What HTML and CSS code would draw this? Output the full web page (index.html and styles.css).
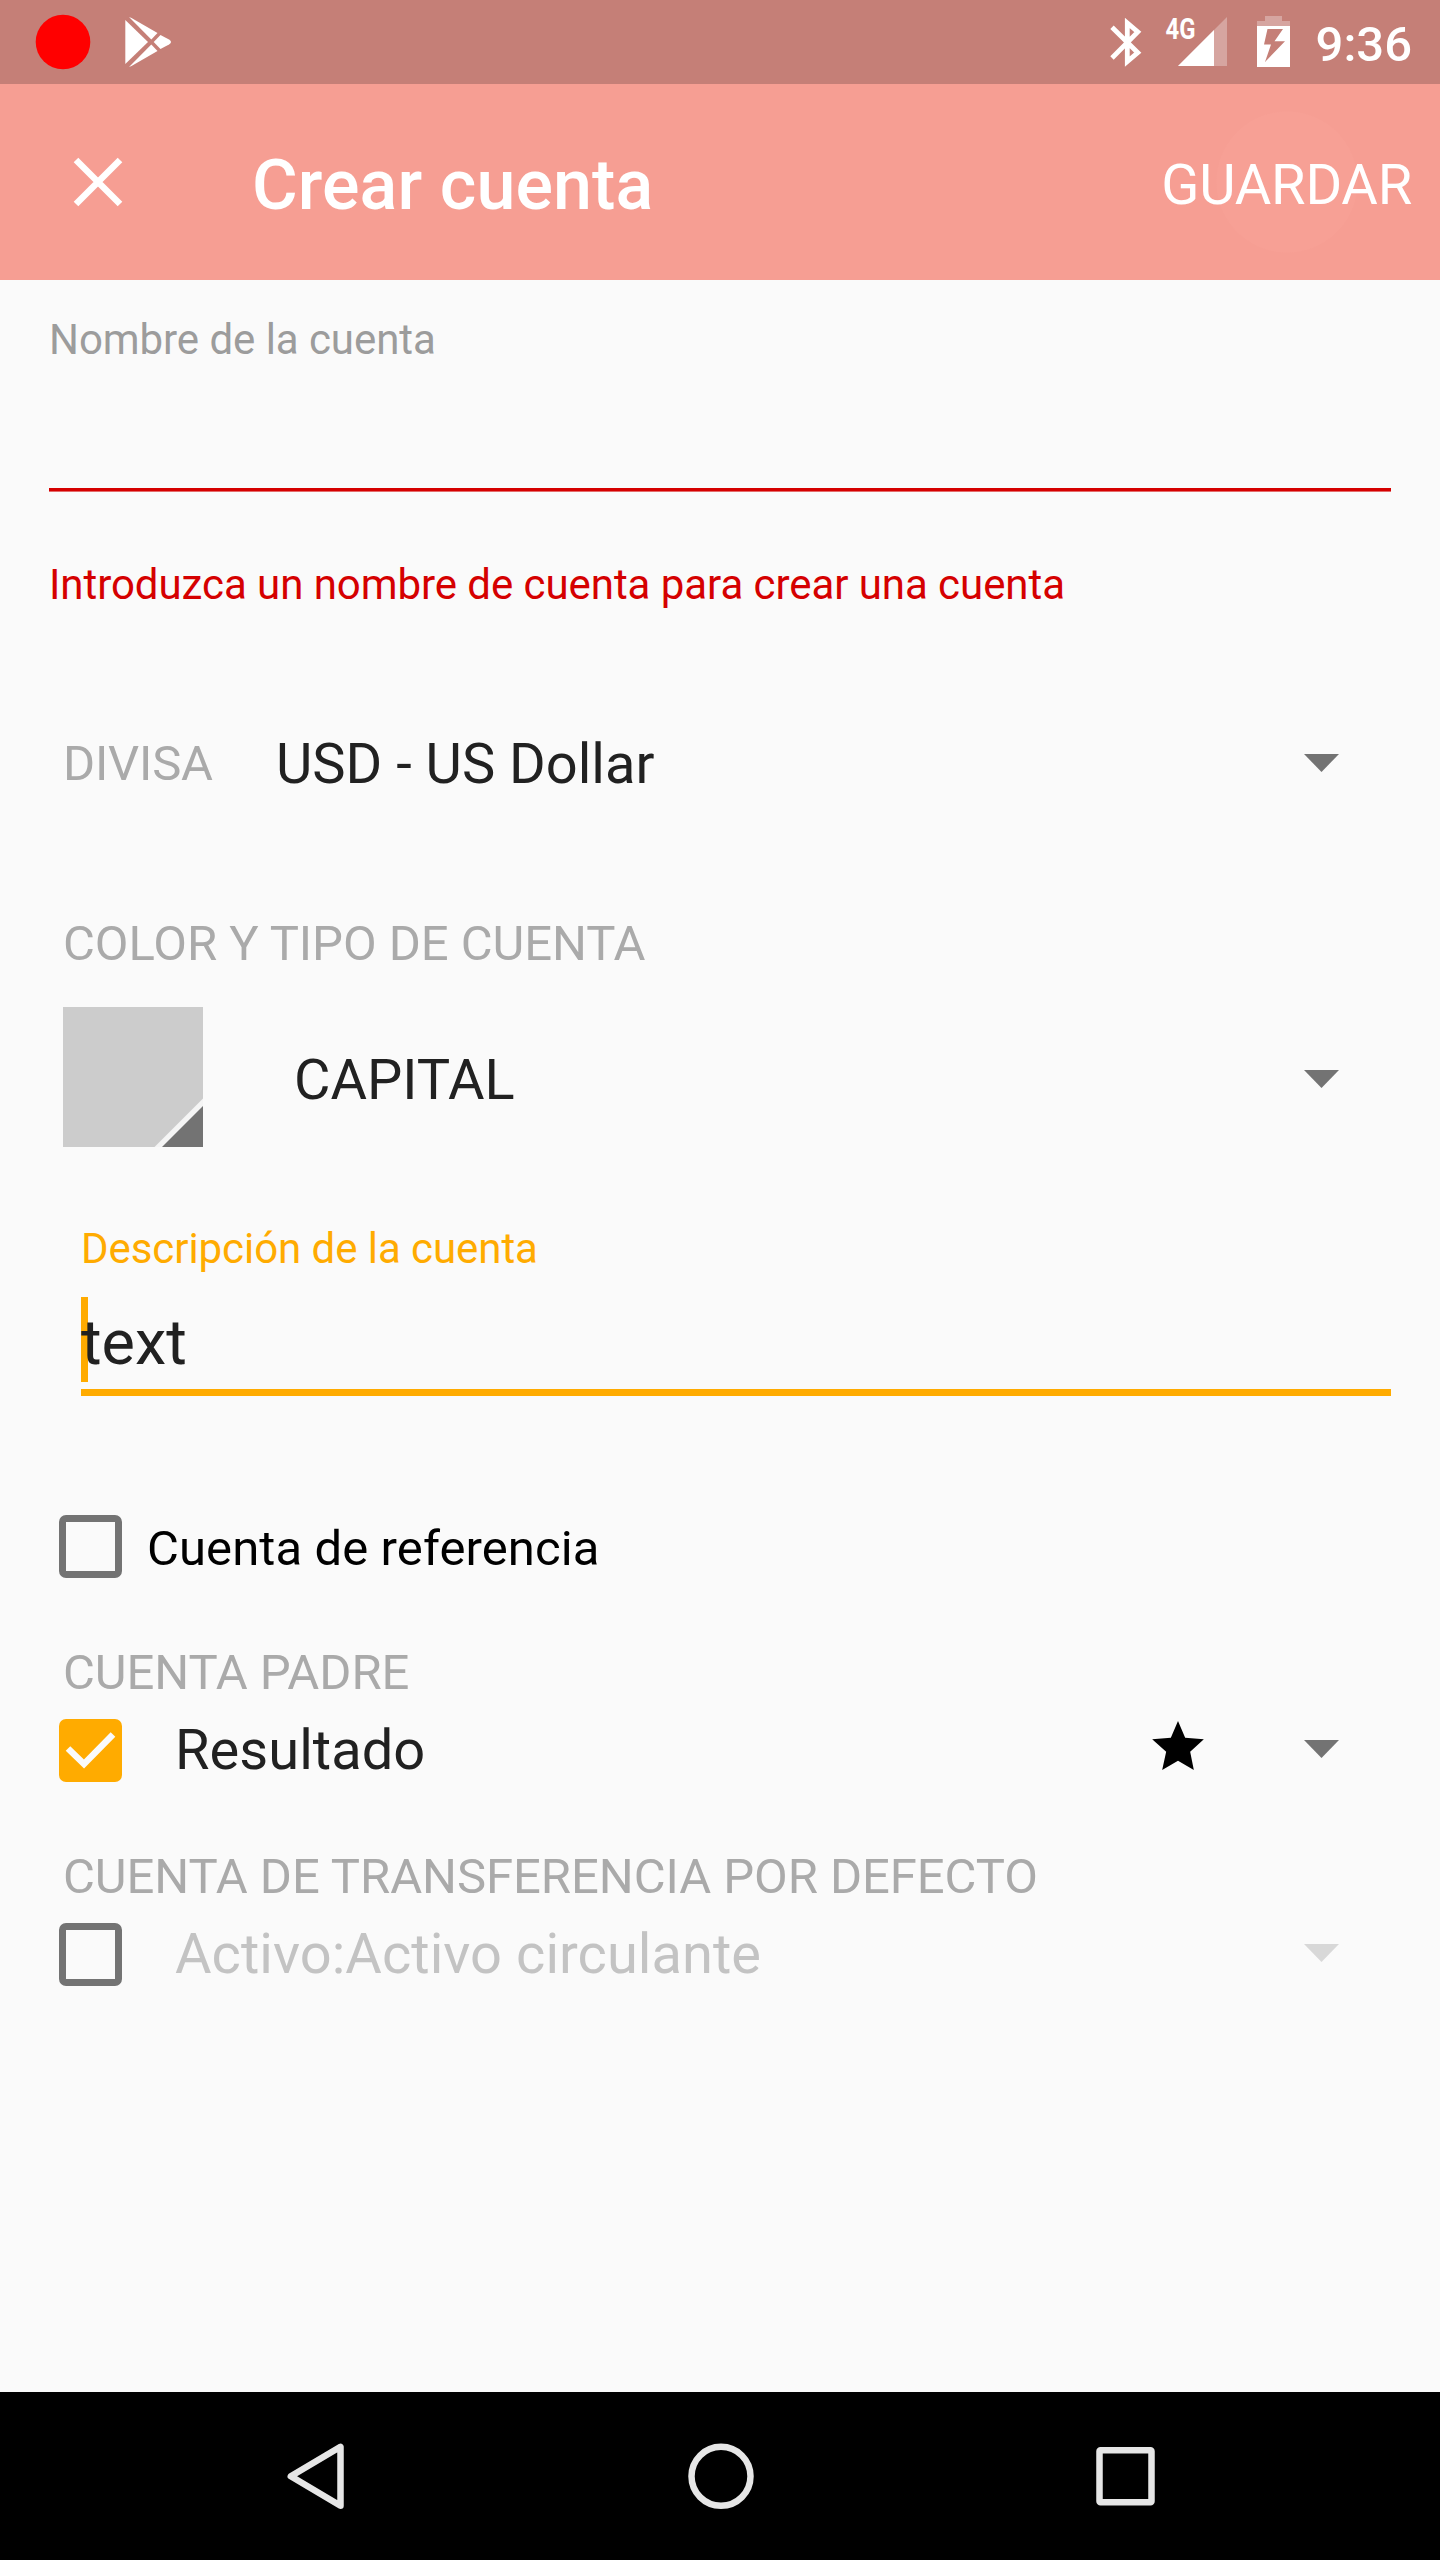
FILE: index.html
```html
<!DOCTYPE html>
<html lang="es">
<head>
<meta charset="utf-8">
<title>Crear cuenta</title>
<link rel="stylesheet" href="styles.css">
</head>
<body>
<div class="screen">
  <header class="status">
    <svg class="status-left" viewBox="0 0 200 84">
      <circle cx="63" cy="42" r="27.3" fill="#f00"/>
      <g fill="#fff">
        <path d="M125.300 20 L148 42 L125.300 64 Z"/>
        <path d="M129 17 L131.500 18 L157.500 33 L151.300 39.500 Z"/>
        <path d="M129 67 L131.500 66 L157.500 51 L151.300 44.500 Z"/>
        <path d="M160.500 35 L169 39.500 Q173 42 169 44.500 L160.500 49 L153.700 42 Z"/>
      </g>
    </svg>
    <div class="status-right">
      <svg class="status-icons" viewBox="1100 0 210 84">
        <path d="M1112 27.300 L1137.800 52.700 L1127.300 61.500 V23 L1137.800 32 L1112 58" fill="none" stroke="#fff" stroke-width="4.800"/>
        <path d="M1227 17 V66 H1178 Z" fill="#fff" fill-opacity=".3"/>
        <path d="M1214 30 V66 H1178 Z" fill="#fff"/>
        <path d="M1265 16 H1282 V21 H1290 V26 H1257 V21 H1265 Z" fill="#fff" fill-opacity=".3"/>
        <path fill-rule="evenodd" d="M1257 26 H1290 V67 H1257 Z M1267.500 29 L1264 44.500 H1271 L1265 62 L1285 41.300 H1274.500 L1283 29 Z" fill="#fff"/>
        <text class="network" x="1165.500" y="39" textLength="30" lengthAdjust="spacingAndGlyphs">4G</text>
      </svg>
      <span class="clock">9:36</span>
    </div>
  </header>
  <div class="toolbar">
    <svg class="close" viewBox="0 0 50 50"><path d="M3 3 L47 47 M47 3 L3 47" stroke="#fff" stroke-width="6.500"/></svg>
    <h1 class="title">Crear cuenta</h1>
    <span class="save">GUARDAR</span>
  </div>
  <main class="form">
    <div class="field name">
      <label class="hint">Nombre de la cuenta</label>
      <div class="name-line"></div>
      <p class="error">Introduzca un nombre de cuenta para crear una cuenta</p>
    </div>
    <div class="row currency">
      <span class="caption currency-caption">DIVISA</span>
      <span class="value">USD - US Dollar</span>
      <i class="arrow"></i>
    </div>
    <div class="caption type-caption">COLOR Y TIPO DE CUENTA</div>
    <div class="row type">
      <svg class="swatch" viewBox="0 0 140 140"><path d="M0 0H140V140H0Z" fill="#ccc"/><path d="M91.500 140 L140 91.500 V140 Z" fill="#f5f5f5"/><path d="M99 140 L140 99 V140 Z" fill="#737373"/></svg>
      <span class="value">CAPITAL</span>
      <i class="arrow"></i>
    </div>
    <div class="description">
      <label class="hint active">Descripción de la cuenta</label>
      <div class="input"><i class="cursor"></i><span class="input-text">text</span></div>
    </div>
    <div class="row placeholder">
      <i class="box"></i>
      <span class="box-label">Cuenta de referencia</span>
    </div>
    <div class="caption parent-caption">CUENTA PADRE</div>
    <div class="row account">
      <svg class="box checked" viewBox="0 0 63 63"><path d="M9 29.500 L25 45 L54 15.500" fill="none" stroke="#fafafa" stroke-width="6.500"/></svg>
      <span class="value">Resultado</span>
      <svg class="star" viewBox="215 242 155 147"><path d="M292.500 242 L314 292 L370 297 L329 334 L340 389 L292.500 361 L245 389 L257 334 L215 297 L271 292 Z"/></svg>
      <i class="arrow"></i>
    </div>
    <div class="caption transfer-caption">CUENTA DE TRANSFERENCIA POR DEFECTO</div>
    <div class="row account disabled">
      <i class="box"></i>
      <span class="value">Activo:Activo circulante</span>
      <i class="arrow"></i>
    </div>
  </main>
  <nav class="navbar">
    <svg viewBox="0 0 68 68"><path d="M59.500 4.800 V63.800 L9.800 34.300 Z"/></svg>
    <svg viewBox="0 0 68 68"><circle cx="34" cy="34.300" r="29.500"/></svg>
    <svg viewBox="0 0 68 68"><rect x="7.500" y="8.300" width="52" height="52" rx="1"/></svg>
  </nav>
</div>
</body>
</html>
```
FILE: styles.css
```css
* { box-sizing: border-box; }
body { margin: 0; background: #fafafa; font-family: Roboto, sans-serif; color: #212121; }
.screen { width: 1440px; height: 2560px; display: flex; flex-direction: column; overflow: hidden; }
.status { height: 84px; flex: none; background: #c57f77; display: flex; justify-content: space-between; color: #fff; }
.status-left { width: 200px; height: 84px; }
.status-right { display: flex; padding-right: 28px; }
.status-icons { width: 210px; height: 84px; }
.network { font: 700 29px Roboto, sans-serif; fill: #fff; }
.clock { width: 102px; font-size: 49px; font-weight: 500; line-height: 57px; padding-top: 16px; text-align: right; }
.toolbar {
  height: 196px;
  flex: none;
  background: radial-gradient(circle at 1287px 98px, #f7a095 70px, transparent 71px) #f69e93;
  display: flex;
  align-items: center;
  padding: 6px 28px 0 73px;
  color: #fff;
}
.close { width: 50px; height: 50px; margin-bottom: 6px; }
.title { margin: 0 0 0 129px; font-size: 70px; font-weight: 500; line-height: 82px; letter-spacing: .1px; }
.save { margin-left: auto; font-size: 56px; line-height: 66px; letter-spacing: -.2px; }
.form { flex: 1; display: flex; flex-direction: column; }
.name { padding: 35px 49px 0; }
.hint { display: block; font-size: 42px; line-height: 50px; letter-spacing: -.06px; color: #9c9c9c; }
.name-line { height: 4px; margin-top: 123px; background: linear-gradient(#d50000 3px, #e36b6b 3px); }
.error { margin: 68px 0 0; font-size: 42px; line-height: 50px; letter-spacing: -.06px; color: #d50000; }
.row { display: flex; align-items: center; padding-right: 101px; }
.caption { font-size: 49px; line-height: 58px; letter-spacing: -.06px; color: #aaa; }
.value { font-size: 56px; line-height: 66px; }
.arrow { flex: none; margin-left: auto; margin-bottom: 2px; width: 35px; height: 18px; background: #737373; clip-path: polygon(0 0, 100% 0, 50% 100%); }
.currency { margin-top: 119px; padding-left: 63px; height: 70px; }
.currency-caption { width: 213px; letter-spacing: -.2px; }
.type-caption { padding-left: 63px; margin-top: 116px; }
.type { height: 140px; margin-top: 34px; padding-left: 63px; }
.type .value { margin-top: 6px; }
.type .arrow { margin: 4px 0 0 auto; }
.swatch { width: 140px; height: 140px; margin-right: 91px; }
.description { margin: 77px 49px 0 81px; }
.active { color: #ffab00; }
.input { position: relative; height: 122px; border-bottom: 7px solid #ffab00; padding-top: 32px; }
.input-text { position: relative; display: block; font-size: 63px; line-height: 74px; }
.cursor { position: absolute; left: 0; top: 23px; width: 7px; height: 85px; background: #ffab00; }
.placeholder { margin-top: 118px; padding-left: 59px; height: 64px; color: #000; }
.box { flex: none; width: 63px; height: 63px; border: 7px solid #737373; border-radius: 7px; }
.checked { border: 0; background: #ffab00; }
.box-label { font-size: 49px; line-height: 58px; letter-spacing: .1px; margin: 6px 0 0 25px; }
.parent-caption { padding-left: 63px; margin-top: 66px; }
.account { height: 66px; padding-left: 59px; margin-top: 15px; }
.account .value { margin-left: 53px; letter-spacing: .05px; }
.star { width: 52px; height: 49px; margin: 0 100px 9px auto; }
.star + .arrow { margin-left: 0; }
.transfer-caption { padding-left: 63px; margin-top: 65px; }
.disabled .value { color: #c3c3c3; }
.disabled .arrow { background: #d8d8d8; }
.navbar { height: 168px; flex: none; background: #000; display: flex; justify-content: space-between; align-items: center; padding: 0 280px 0 281px; }
.navbar svg { width: 68px; height: 68px; fill: none; stroke: #e6e6e6; stroke-width: 6.5; stroke-linejoin: round; }
```
